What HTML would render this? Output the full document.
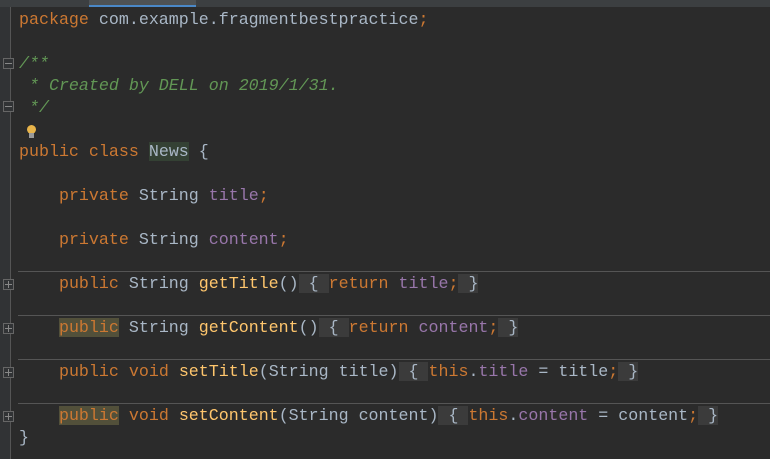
<!DOCTYPE html>
<html><head><meta charset="utf-8"><style>
html,body{margin:0;padding:0;width:770px;height:459px;overflow:hidden;background:#2b2b2b}
.tabs{position:absolute;left:0;top:0;width:770px;height:7px;background:#3c3f41}
.at{position:absolute;left:89px;top:0;width:107px;height:5px;background:#4e5254;border-bottom:2px solid #4a88c7}
.gut{position:absolute;left:0;top:7px;width:10px;height:452px;background:#313335;border-right:1px solid #555}
.l{position:absolute;left:19px;font-family:"Liberation Mono",monospace;font-size:16.65px;line-height:22px;height:22px;white-space:pre;color:#a9b7c6}
.k{color:#cc7832}.f{color:#9876aa}.m{color:#ffc66d}.c{color:#629755;font-style:italic}
.fo{background:#3b3b3b}.hl{background:#52503a}.nw{background:#344134}
.sep{position:absolute;left:18px;width:752px;height:1px;background:#555}
.fold{position:absolute;left:3px;width:11px;height:11px;border:1px solid #666;box-sizing:border-box;background:#313335}
.fold:after{content:"";position:absolute;left:1px;top:4px;width:7px;height:1px;background:#888}
.plus:before{content:"";position:absolute;left:4px;top:1px;width:1px;height:7px;background:#888}
</style></head><body>
<div class="tabs"><div class="at"></div></div>
<div class="gut"></div>
<div class="l" style="top:9px"><span class="k">package</span> com.example.fragmentbestpractice<span class="k">;</span></div>
<div class="l c" style="top:53px">/**</div>
<div class="l c" style="top:75px"> * Created by DELL on 2019/1/31.</div>
<div class="l c" style="top:97px"> */</div>
<div style="position:absolute;left:27px;top:125px;width:9px;height:9px;border-radius:50%;background:#e8b44a"></div>
<div style="position:absolute;left:29px;top:133px;width:5px;height:5px;background:#999"></div>
<div class="l" style="top:141px"><span class="k">public class</span> <span class="nw">News</span> {</div>
<div class="l" style="top:185px">    <span class="k">private</span> String <span class="f">title</span><span class="k">;</span></div>
<div class="l" style="top:229px">    <span class="k">private</span> String <span class="f">content</span><span class="k">;</span></div>
<div class="sep" style="top:271px"></div>
<div class="l" style="top:273px">    <span class="k">public</span> String <span class="m">getTitle</span>()<span class="fo"> { </span><span class="k">return</span> <span class="f">title</span><span class="k">;</span><span class="fo"> }</span></div>
<div class="sep" style="top:315px"></div>
<div class="l" style="top:317px">    <span class="k hl">public</span> String <span class="m">getContent</span>()<span class="fo"> { </span><span class="k">return</span> <span class="f">content</span><span class="k">;</span><span class="fo"> }</span></div>
<div class="sep" style="top:359px"></div>
<div class="l" style="top:361px">    <span class="k">public void</span> <span class="m">setTitle</span>(String title)<span class="fo"> { </span><span class="k">this</span>.<span class="f">title</span> = title<span class="k">;</span><span class="fo"> }</span></div>
<div class="sep" style="top:403px"></div>
<div class="l" style="top:405px">    <span class="k hl">public</span><span class="k"> void</span> <span class="m">setContent</span>(String content)<span class="fo"> { </span><span class="k">this</span>.<span class="f">content</span> = content<span class="k">;</span><span class="fo"> }</span></div>
<div class="l" style="top:427px">}</div>
<div class="fold" style="top:58px"></div>
<div class="fold" style="top:101px"></div>
<div class="fold plus" style="top:279px"></div>
<div class="fold plus" style="top:323px"></div>
<div class="fold plus" style="top:367px"></div>
<div class="fold plus" style="top:411px"></div>
</body></html>
